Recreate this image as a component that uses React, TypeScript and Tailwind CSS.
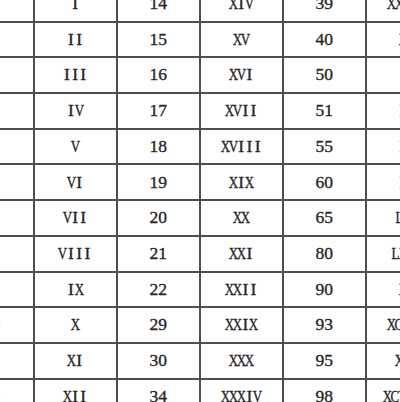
import React from "react";

const rows: [string, string, string, string, string, string][] = [
  ["1", "I", "14", "XIV", "39", "XXXIX"],
  ["2", "II", "15", "XV", "40", "XL"],
  ["3", "III", "16", "XVI", "50", "L"],
  ["4", "IV", "17", "XVII", "51", "LI"],
  ["5", "V", "18", "XVIII", "55", "LV"],
  ["6", "VI", "19", "XIX", "60", "LX"],
  ["7", "VII", "20", "XX", "65", "LXV"],
  ["8", "VIII", "21", "XXI", "80", "LXXX"],
  ["9", "IX", "22", "XXII", "90", "XC"],
  ["10", "X", "29", "XXIX", "93", "XCIII"],
  ["11", "XI", "30", "XXX", "95", "XCV"],
  ["12", "XII", "34", "XXXIV", "98", "XCVIII"],
];

function Roman({ s }: { s: string }) {
  return (
    <span className="inline-flex">
      {s.split("").map((c, i) => (
        <span key={i} className="inline-flex w-[8.2px] justify-center">
          {c === "I" ? (
            <span className="inline-block">{c}</span>
          ) : (
            <span className="inline-block scale-x-[0.74]">{c}</span>
          )}
        </span>
      ))}
    </span>
  );
}

export default function App() {
  return (
    <div className="w-[400px] h-[402px] overflow-hidden bg-white antialiased">
      <div
        className="-ml-[48.6px] -mt-[13px] grid w-max grid-cols-[repeat(6,81.1px)] auto-rows-[33.7px] gap-[2px] bg-[#4e4e4e] text-[17.5px] text-[#262626]"
        style={{ fontFamily: '"Liberation Serif", "DejaVu Serif", serif' }}
      >
        {rows.map((r, ri) =>
          r.map((v, ci) => (
            <div
              key={`${ri}-${ci}`}
              className={
                ci === 0
                  ? "flex items-center justify-center bg-white leading-none text-[#cfcfcf]"
                  : "flex items-center justify-center bg-white leading-none [-webkit-text-stroke:0.35px_#262626]"
              }
            >
              {ci % 2 === 1 ? <Roman s={v} /> : <span>{v}</span>}
            </div>
          ))
        )}
      </div>
    </div>
  );
}
